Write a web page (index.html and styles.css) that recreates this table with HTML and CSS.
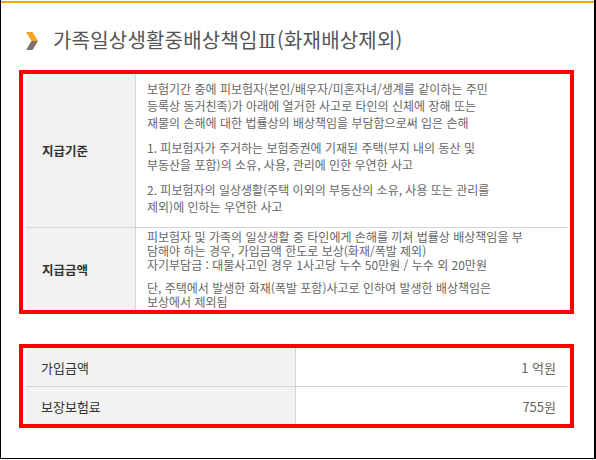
FILE: index.html
```html
<!DOCTYPE html>
<html lang="ko">
<head>
<meta charset="utf-8">
<link rel="stylesheet" href="styles.css">
</head>
<body>
<div class="frame">
  <div class="topbar"></div>
  <div class="content">
    <h1 class="title">
      <svg class="chev" width="12" height="18" viewBox="0 0 12 18">
        <polygon points="0,0 6.5,0 12,9 5.5,9" fill="#f6a521"/>
        <polygon points="5.5,9 12,9 6.5,18 0,18" fill="#7b7369"/>
      </svg>
      <span>가족일상생활중배상책임<span class="roman">Ⅲ</span>(화재배상제외)</span>
    </h1>

    <div class="hl hl-one">
      <table class="info">
        <tr>
          <th>지급기준</th>
          <td class="c1">
            <p>보험기간 중에 피보험자(본인/배우자/미혼자녀/생계를 같이하는 주민<br>등록상 동거친족)가 아래에 열거한 사고로 타인의 신체에 장해 또는<br>재물의 손해에 대한 법률상의 배상책임을 부담함으로써 입은 손해</p>
            <p>1. 피보험자가 주거하는 보험증권에 기재된 주택(부지 내의 동산 및<br>부동산을 포함)의 소유, 사용, 관리에 인한 우연한 사고</p>
            <p>2. 피보험자의 일상생활(주택 이외의 부동산의 소유, 사용 또는 관리를<br>제외)에 인하는 우연한 사고</p>
          </td>
        </tr>
        <tr>
          <th>지급금액</th>
          <td class="c2">
            <p>피보험자 및 가족의 일상생활 중 타인에게 손해를 끼쳐 법률상 배상책임을 부<br>담해야 하는 경우, 가입금액 한도로 보상(화재/폭발 제외)<br>자기부담금 : 대물사고인 경우 1사고당 누수 50만원 / 누수 외 20만원</p>
            <p>단, 주택에서 발생한 화재(폭발 포함)사고로 인하여 발생한 배상책임은<br>보상에서 제외됨</p>
          </td>
        </tr>
      </table>
    </div>

    <div class="hl hl-two">
      <table class="sum">
        <tr>
          <th>가입금액</th>
          <td>1 억원</td>
        </tr>
        <tr>
          <th>보장보험료</th>
          <td>755원</td>
        </tr>
      </table>
    </div>
  </div>
</div>
</body>
</html>
```

FILE: styles.css
```css
html, body {
  margin: 0;
  padding: 0;
  background: #fff;
}

body {
  font-family: "Noto Sans CJK KR", "Noto Sans", sans-serif;
  color: #666;
}

.frame {
  box-sizing: border-box;
  width: 596px;
  height: 459px;
  border-left: 1px solid #000;
  border-right: 2px solid #000;
  border-bottom: 1px solid #000;
  padding-top: 1px;
}

.topbar {
  height: 2px;
  background: #f7a600;
}

.content {
  padding: 0 26px 0 25px;
}

.title {
  display: flex;
  align-items: center;
  gap: 15px;
  margin: 0;
  padding-top: 27px;
  height: 22px;
  font-size: 20px;
  font-weight: normal;
  color: #555;
  line-height: 22px;
  letter-spacing: 0.2px;
}

.roman {
  font-family: "DejaVu Serif", serif;
  font-size: 18px;
  letter-spacing: 0;
  margin: 0 1px;
}

.chev {
  display: block;
  flex: none;
}

.hl {
  position: relative;
}

.hl::after {
  content: "";
  position: absolute;
  top: -4px;
  left: -7px;
  right: -6px;
  bottom: -3px;
  border: 4px solid #ff0000;
  pointer-events: none;
}

.hl-one {
  margin-top: 22px;
}

.hl-two {
  margin-top: 37px;
}

.hl-two::after {
  top: -4px;
  bottom: -2px;
}

table {
  width: 541px;
  border-collapse: collapse;
  font-size: 12px;
}

th {
  background: #f2f2f2;
  color: #333;
  text-align: left;
  vertical-align: middle;
  padding: 0 0 0 16px;
  border-right: 1px solid #d4d4d4;
}

.info th {
  width: 93px;
  font-weight: bold;
  font-size: 12.5px;
}

.info tr + tr th,
.info tr + tr td {
  border-top: 1px solid #d4d4d4;
}

.info td {
  vertical-align: top;
  padding: 0 11px;
}

.info p {
  margin: 0;
}

.c1 {
  height: 153px;
  box-sizing: border-box;
  padding-top: 6px !important;
  line-height: 17px;
}

.c1 p + p {
  margin-top: 8px;
}

.c2 {
  height: 84px;
  box-sizing: border-box;
  padding-top: 2px !important;
  line-height: 14px;
}

.c2 p + p {
  margin-top: 9px;
}

.sum {
  border-bottom: 1px solid #d4d4d4;
}

.sum th {
  width: 254px;
  font-size: 13px;
  font-weight: normal;
  padding-left: 15px;
  height: 38px;
}

.sum tr + tr th,
.sum tr + tr td {
  border-top: 1px solid #d4d4d4;
}

.sum td {
  text-align: right;
  padding-right: 11px;
  font-size: 13px;
  color: #666;
}
```
